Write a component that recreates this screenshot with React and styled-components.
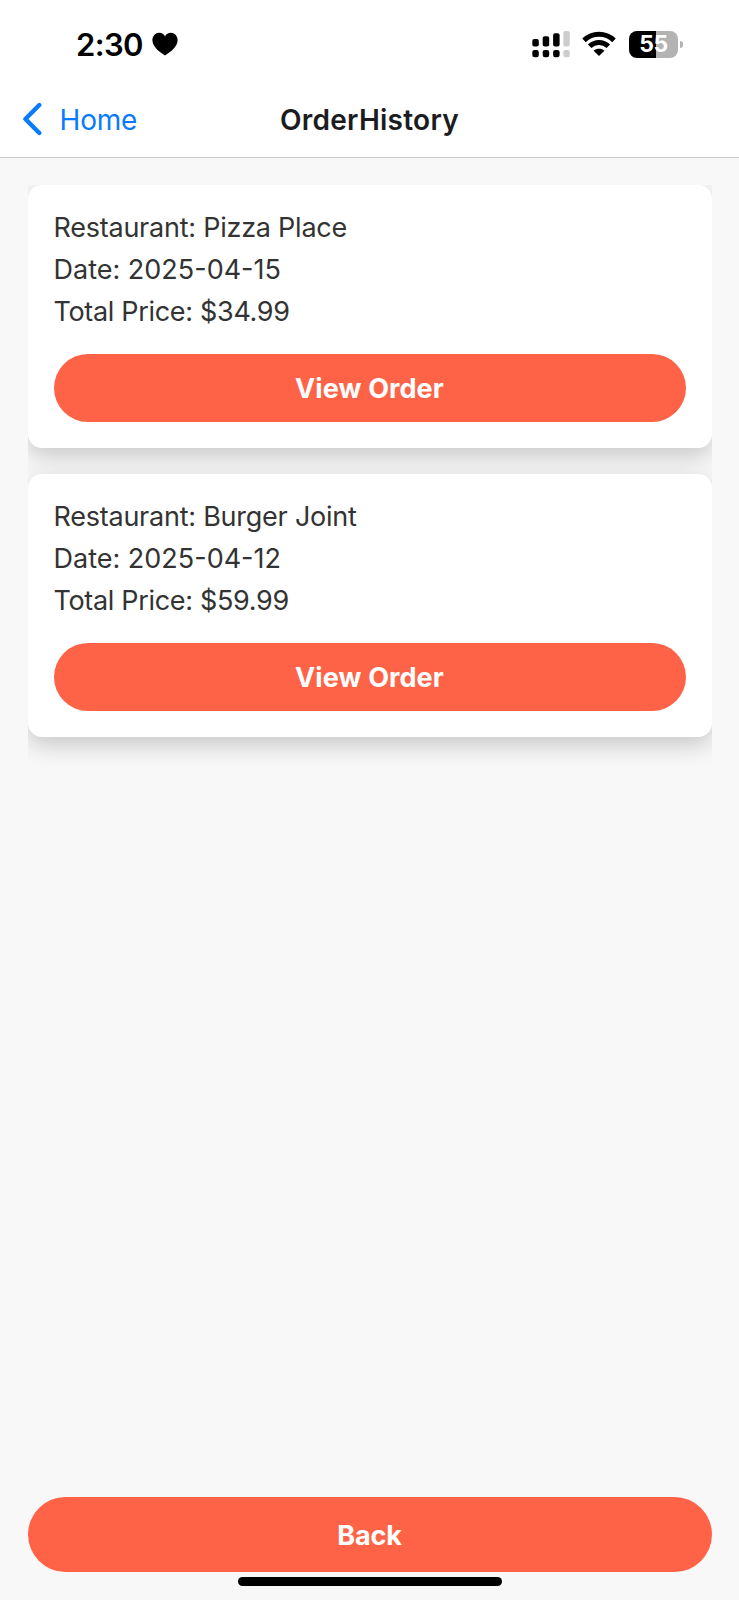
import React from "react";
import styled, { createGlobalStyle } from "styled-components";

const GlobalStyle = createGlobalStyle`
  * { box-sizing: border-box; }
  body {
    margin: 0;
    background: #f8f8f8;
    font-family: Inter, "Liberation Sans", sans-serif;
  }
`;

const Screen = styled.div`
  display: flex;
  flex-direction: column;
  width: 739px;
  height: 1600px;
  background: #f8f8f8;
  overflow: hidden;
`;

const Top = styled.header`
  height: 158px;
  background: #fff;
  border-bottom: 1px solid #c9c9c9;
`;

const StatusBar = styled.div`
  display: flex;
  align-items: center;
  height: 88px;
  padding: 0 56px 0 76px;
`;

const Time = styled.span`
  width: 75.5px;
  padding-top: 1px;
  font-size: 31px;
  font-weight: 600;
  line-height: 36px;
  letter-spacing: -0.6px;
  color: #000;
  white-space: nowrap;
`;

const StatusIcons = styled.div`
  display: flex;
  align-items: center;
  gap: 12px;
  margin-left: auto;
`;

const Battery = styled.div`
  position: relative;
  display: flex;
  align-items: center;
  justify-content: center;
  width: 49px;
  height: 27px;
  margin: 0 5px 0 1px;
  border-radius: 8px;
  background: linear-gradient(90deg, #000 27px, #b3b3b3 27px);
  font-size: 23px;
  font-weight: 700;
  line-height: 27px;
  letter-spacing: -0.4px;
  color: #fff;

  &::after {
    content: "";
    position: absolute;
    right: -5px;
    top: 10px;
    width: 3px;
    height: 7px;
    border-radius: 0 4px 4px 0;
    background: #b3b3b3;
  }
`;

const NavBar = styled.nav`
  display: grid;
  grid-template-columns: 1fr auto 1fr;
  align-items: center;
  height: 62px;
  padding: 0 21px;
`;

const BackLink = styled.a`
  display: flex;
  align-items: center;
  gap: 16.6px;
  font-size: 28px;
  line-height: 34px;
  letter-spacing: -0.2px;
  color: #0a7aff;
`;

const BackLabel = styled.span`
  padding-top: 1px;
`;

const Title = styled.h1`
  margin: 0;
  padding-top: 1px;
  font-size: 28px;
  font-weight: 600;
  line-height: 34px;
  letter-spacing: 0.25px;
  color: #1c1c1e;
`;

const Content = styled.main`
  display: flex;
  flex: 1;
  flex-direction: column;
  padding: 27px 27.5px 0;
`;

const OrderList = styled.section`
  display: flex;
  flex: 1;
  flex-direction: column;
  gap: 26px;
  overflow: hidden;
`;

const OrderCard = styled.article`
  height: 263px;
  padding: 22px 26px 26px;
  border-radius: 14px;
  background: #fff;
  box-shadow: 0 8px 23px rgba(0, 0, 0, 0.2);
`;

const OrderLine = styled.p`
  margin: 0;
  font-size: 27px;
  line-height: 42px;
  letter-spacing: ${({ $tracking }) => $tracking || "-0.24px"};
  color: #333;
  white-space: nowrap;
`;

const PillButton = styled.button`
  display: flex;
  flex-shrink: 0;
  align-items: center;
  justify-content: center;
  width: 100%;
  height: ${({ $tall }) => ($tall ? "75px" : "68px")};
  margin-top: ${({ $tall }) => ($tall ? "0" : "21px")};
  padding: 1px 0 0;
  border: 0;
  border-radius: 38px;
  background: #ff6347;
  font-family: inherit;
  font-size: 27px;
  font-weight: 700;
  letter-spacing: ${({ $tall }) => ($tall ? "-0.1px" : "0.1px")};
  color: #fff;
`;

const HomeArea = styled.footer`
  display: flex;
  justify-content: center;
  height: 28px;
  padding-top: 5px;
`;

const HomeIndicator = styled.div`
  width: 264px;
  height: 9px;
  border-radius: 5px;
  background: #000;
`;

const HeartIcon = () => (
  <svg width="26" height="24" viewBox="0 0 26 24">
    <path d="M13 23.4C10 21.4 0.4 15.8 0.4 8.2C0.4 3.8 3.5 0.8 7.2 0.8C9.8 0.8 11.9 2.2 13 4.4C14.1 2.2 16.2 0.8 18.8 0.8C22.5 0.8 25.6 3.8 25.6 8.2C25.6 15.8 16 21.4 13 23.4Z" />
  </svg>
);

const SIGNAL = [
  { x: 0.3, y: 8 },
  { x: 10.7, y: 5.3 },
  { x: 21.1, y: 2.3 },
  { x: 31.3, y: 0, faint: true },
];

const SignalIcon = () => (
  <svg width="38" height="27" viewBox="0 0 38 27">
    {SIGNAL.map(({ x, y, faint }) => (
      <g key={x} fill={faint ? "#cdcdcd" : "#000"}>
        <rect x={x} y={y} width="6.5" height={15.6 - y} rx="2" />
        <rect x={x} y="19" width="6.5" height="7.2" rx="2.2" />
      </g>
    ))}
  </svg>
);

const WifiIcon = () => (
  <svg width="34" height="26" viewBox="0 0 34 26">
    <g fill="none" stroke="#000" strokeWidth="5">
      <path d="M2 9.4C10.5 1.2 23.5 1.2 32 9.4" />
      <path d="M7.7 15.3C13 10.2 21 10.2 26.3 15.3" />
    </g>
    <path d="M17 25L11.6 19.8C14.7 17.2 19.3 17.2 22.4 19.8Z" />
  </svg>
);

const ChevronIcon = () => (
  <svg width="22" height="34" viewBox="0 0 22 34">
    <path
      d="M18.3 3L4.4 17L18.3 31"
      fill="none"
      stroke="#0a7aff"
      strokeWidth="4.4"
      strokeLinecap="round"
      strokeLinejoin="round"
    />
  </svg>
);

const orders = [
  { restaurant: "Pizza Place", date: "2025-04-15", total: "$34.99" },
  { restaurant: "Burger Joint", date: "2025-04-12", total: "$59.99" },
];

export default function App() {
  return (
    <>
      <GlobalStyle />
      <Screen>
        <Top>
          <StatusBar>
            <Time>2:30</Time>
            <HeartIcon />
            <StatusIcons>
              <SignalIcon />
              <WifiIcon />
              <Battery>55</Battery>
            </StatusIcons>
          </StatusBar>
          <NavBar>
            <BackLink>
              <ChevronIcon />
              <BackLabel>Home</BackLabel>
            </BackLink>
            <Title>OrderHistory</Title>
          </NavBar>
        </Top>
        <Content>
          <OrderList>
            {orders.map((order) => (
              <OrderCard key={order.date}>
                <OrderLine>Restaurant: {order.restaurant}</OrderLine>
                <OrderLine $tracking="0">Date: {order.date}</OrderLine>
                <OrderLine $tracking="-0.32px">Total Price: {order.total}</OrderLine>
                <PillButton>View Order</PillButton>
              </OrderCard>
            ))}
          </OrderList>
          <PillButton $tall>Back</PillButton>
        </Content>
        <HomeArea>
          <HomeIndicator />
        </HomeArea>
      </Screen>
    </>
  );
}
